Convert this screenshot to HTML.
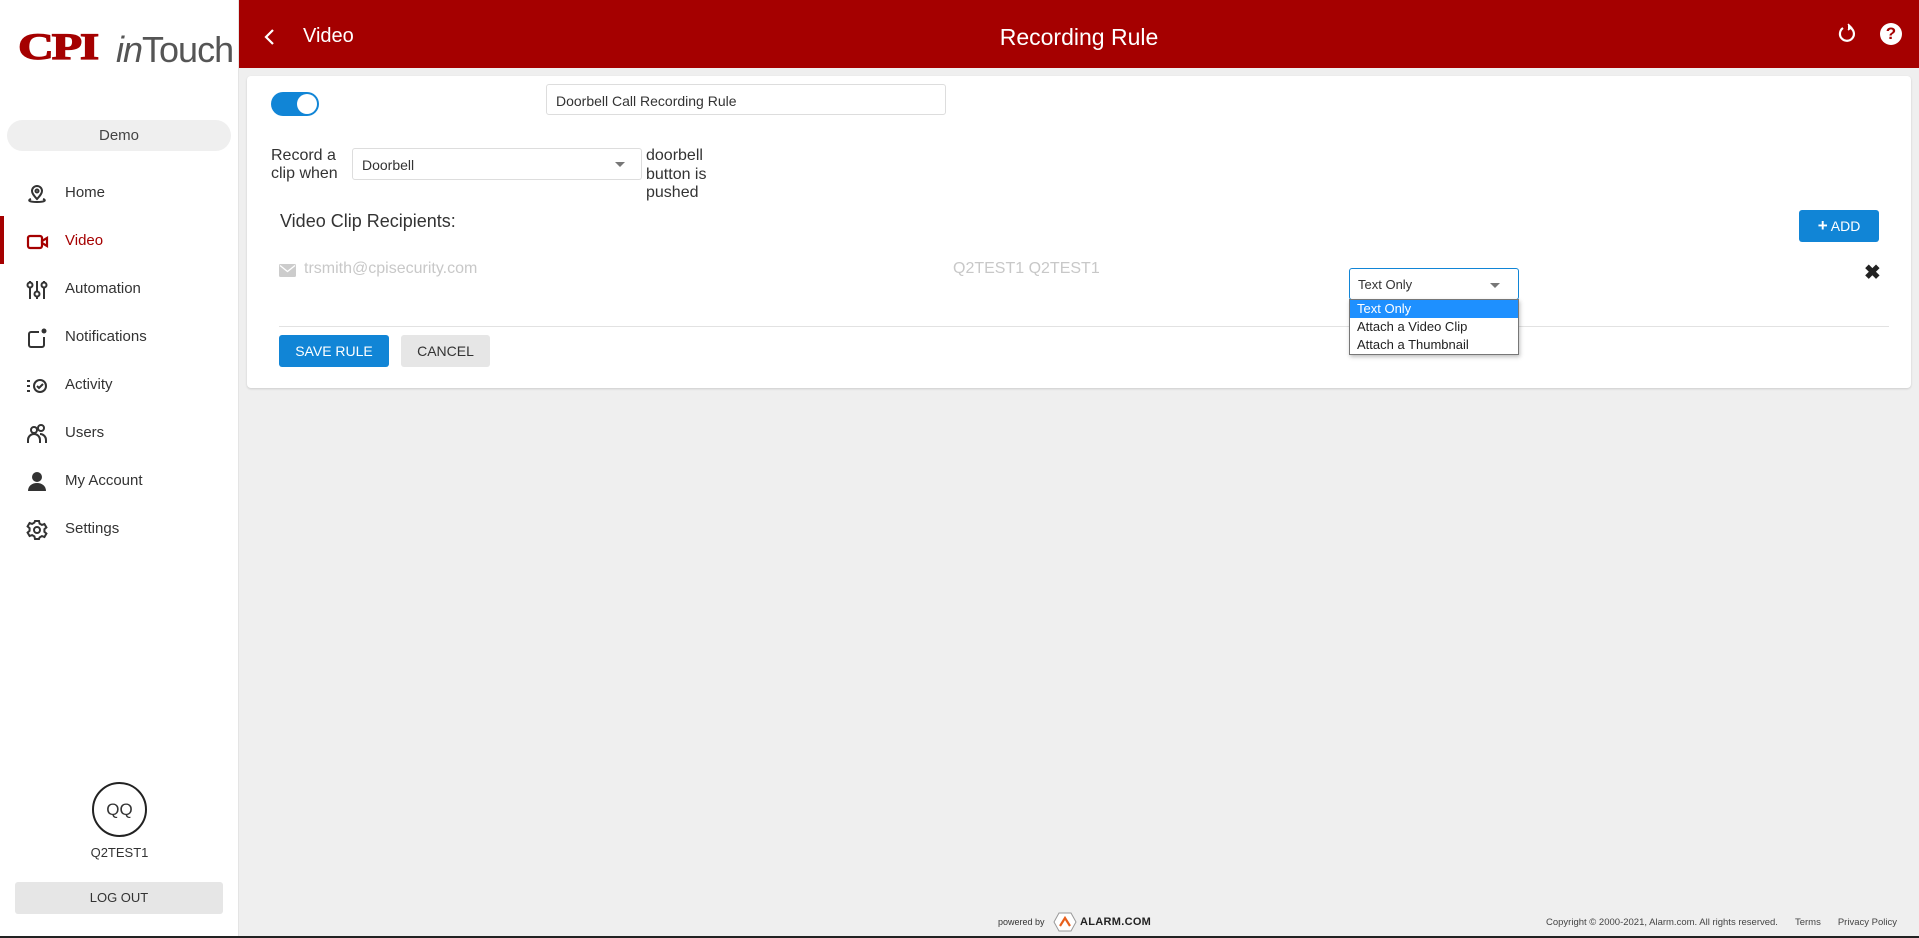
<!DOCTYPE html>
<html><head><meta charset="utf-8">
<style>
*{box-sizing:border-box;margin:0;padding:0}
body{width:1919px;height:938px;overflow:hidden;background:#efefef;font-family:"Liberation Sans",Arial,sans-serif;position:relative}
.abs{position:absolute}
#hdr{left:0;top:0;width:1919px;height:68px;background:#a50000}
#side{left:0;top:0;width:239px;height:936px;background:#fff;border-right:1px solid #e4e4e4}
.nav{position:absolute;left:0;width:239px;height:48px;font-size:15px;color:#333}
.nav span{position:absolute;left:65px;top:16px}
.nav svg{position:absolute;left:26px;top:15px}
#card{left:247px;top:76px;width:1664px;height:312px;background:#fff;border-radius:4px;box-shadow:0 1px 2px rgba(0,0,0,.15)}
.btn{position:absolute;border-radius:3px;font-size:14px;text-align:center}
</style></head><body>
<div id="hdr" class="abs"></div>
<div id="side" class="abs">
  <div class="abs" style="left:18px;top:31px;font-family:'Liberation Serif',serif;font-weight:bold;font-size:46px;color:#a50000;letter-spacing:-2px;transform:scale(1.08,0.8);transform-origin:left top;line-height:40px;-webkit-text-stroke:1.5px #a50000">CPI</div>
  <div class="abs" style="left:116px;top:30px;font-size:36px;color:#555;line-height:40px;letter-spacing:-1px"><i>in</i>Touch</div>
  <div class="abs" style="left:7px;top:120px;width:224px;height:31px;background:#efefef;border-radius:16px;text-align:center;line-height:31px;font-size:15px;color:#444">Demo</div>
  <div class="nav" style="top:168px"><svg width="22" height="22" viewBox="0 0 22 22" fill="none" stroke="#333" stroke-width="2"><path d="M11 3a5 5 0 0 1 5 5c0 3-5 8-5 8s-5-5-5-8a5 5 0 0 1 5-5z"/><circle cx="11" cy="8" r="1.5"/><path d="M5 16c-3 1-3 3 6 3s9-2 6-3"/></svg><span>Home</span></div>
  <div class="abs" style="left:0;top:216px;width:4px;height:48px;background:#a50000"></div>
  <div class="nav" style="top:216px;color:#a50000"><svg width="24" height="22" viewBox="0 0 24 22" fill="none" stroke="#a50000" stroke-width="2.2"><rect x="2" y="5" width="14" height="12" rx="2"/><path d="M16 10l5-3v8l-5-3z"/></svg><span>Video</span></div>
  <div class="nav" style="top:264px"><svg width="22" height="22" viewBox="0 0 22 22" fill="none" stroke="#333" stroke-width="2"><path d="M4 2v18M11 2v18M18 2v18"/><circle cx="4" cy="6" r="2.5" fill="#fff"/><circle cx="11" cy="15" r="2.5" fill="#fff"/><circle cx="18" cy="6" r="2.5" fill="#fff"/></svg><span>Automation</span></div>
  <div class="nav" style="top:312px"><svg width="22" height="22" viewBox="0 0 22 22" fill="none" stroke="#333" stroke-width="2"><path d="M13 5H5a2 2 0 0 0-2 2v11a2 2 0 0 0 2 2h11a2 2 0 0 0 2-2v-8"/><circle cx="18" cy="4" r="2.5" fill="#333" stroke="none"/></svg><span>Notifications</span></div>
  <div class="nav" style="top:360px"><svg width="22" height="22" viewBox="0 0 22 22" fill="none" stroke="#333" stroke-width="2"><path d="M1 6h3M1 11h3M1 16h3"/><circle cx="14" cy="11" r="6"/><path d="M11 11l2 2 4-4"/></svg><span>Activity</span></div>
  <div class="nav" style="top:408px"><svg width="22" height="22" viewBox="0 0 22 22" fill="none" stroke="#333" stroke-width="2"><circle cx="8" cy="7" r="3"/><circle cx="15" cy="5" r="3"/><path d="M2 20v-3a6 6 0 0 1 12 0v3M14 11a6 6 0 0 1 6 6v3"/></svg><span>Users</span></div>
  <div class="nav" style="top:456px"><svg width="22" height="22" viewBox="0 0 22 22" fill="#333"><circle cx="11" cy="6" r="5"/><path d="M2 20c0-5 4-8 9-8s9 3 9 8z"/></svg><span>My Account</span></div>
  <div class="nav" style="top:504px"><svg width="22" height="22" viewBox="0 0 22 22" fill="none" stroke="#333" stroke-width="2"><circle cx="11" cy="11" r="3"/><path d="M9 2h4l.6 2.6 2.3 1.3 2.5-.9 2 3.4-2 1.8v2.6l2 1.8-2 3.4-2.5-.9-2.3 1.3L13 20H9l-.6-2.6-2.3-1.3-2.5.9-2-3.4 2-1.8V9.2l-2-1.8 2-3.4 2.5.9 2.3-1.3z"/></svg><span>Settings</span></div>
  <div class="abs" style="left:92px;top:782px;width:55px;height:55px;border:2px solid #222;border-radius:50%;text-align:center;line-height:51px;font-size:17px;color:#333">QQ</div>
  <div class="abs" style="left:0;top:845px;width:239px;text-align:center;font-size:13px;color:#333">Q2TEST1</div>
  <div class="abs" style="left:15px;top:882px;width:208px;height:32px;background:#e6e6e6;border-radius:3px;text-align:center;line-height:32px;font-size:13px;color:#333">LOG OUT</div>
</div>
<svg class="abs" style="left:263px;top:28px" width="14" height="18" viewBox="0 0 14 18" fill="none" stroke="#fff" stroke-width="2.2"><path d="M10 2L3 9l7 7"/></svg>
<div class="abs" style="left:303px;top:25px;font-size:20px;color:#fff">Video</div>
<div class="abs" style="left:879px;top:24px;width:400px;text-align:center;font-size:23px;color:#fff">Recording Rule</div>
<svg class="abs" style="left:1837px;top:22px" width="20" height="22" viewBox="0 0 20 22" fill="none" stroke="#fff" stroke-width="2.2"><path d="M13 5.5A7 7 0 1 1 6 6"/><path d="M11 2l3.5 3.5L11 8" fill="#fff" stroke-width="1.5"/></svg>
<div class="abs" style="left:1880px;top:23px;width:22px;height:22px;border-radius:50%;background:#fff;color:#a50000;font-weight:bold;font-size:17px;text-align:center;line-height:22px">?</div>

<div id="card" class="abs"></div>
<div class="abs" style="left:271px;top:92px;width:48px;height:24px;border-radius:12px;background:#1185d6"></div>
<div class="abs" style="left:297px;top:94px;width:20px;height:20px;border-radius:50%;background:#fff"></div>
<div class="abs" style="left:546px;top:84px;width:400px;height:31px;border:1px solid #ddd;border-radius:3px;font-size:14px;color:#333;padding:8px 9px">Doorbell Call Recording Rule</div>
<div class="abs" style="left:271px;top:147px;font-size:16px;line-height:18px;color:#333">Record a<br>clip when</div>
<div class="abs" style="left:352px;top:148px;width:290px;height:32px;border:1px solid #ddd;border-radius:3px;font-size:14px;color:#333;padding:8px 9px">Doorbell</div>
<div class="abs" style="left:615px;top:162px;width:0;height:0;border-left:5px solid transparent;border-right:5px solid transparent;border-top:5px solid #777"></div>
<div class="abs" style="left:646px;top:147px;font-size:16px;line-height:18.5px;color:#333">doorbell<br>button is<br>pushed</div>
<div class="abs" style="left:280px;top:211px;font-size:18px;color:#333">Video Clip Recipients:</div>
<div class="btn" style="left:1799px;top:210px;width:80px;height:32px;background:#1185d6;color:#fff;line-height:32px"><b style="font-size:17px">+</b> ADD</div>
<svg class="abs" style="left:279px;top:264px" width="17" height="13" viewBox="0 0 17 13"><rect width="17" height="13" rx="1.5" fill="#ccc"/><path d="M1 1.5l7.5 6 7.5-6" fill="none" stroke="#fff" stroke-width="1.3"/></svg>
<div class="abs" style="left:304px;top:260px;font-size:16px;color:#c8c8c8">trsmith@cpisecurity.com</div>
<div class="abs" style="left:953px;top:260px;font-size:16px;color:#c8c8c8">Q2TEST1 Q2TEST1</div>
<div class="abs" style="left:1349px;top:268px;width:170px;height:32px;border:1px solid #1185d6;border-radius:3px;font-size:13px;color:#333;padding:8px 8px">Text Only</div>
<div class="abs" style="left:1490px;top:283px;width:0;height:0;border-left:5px solid transparent;border-right:5px solid transparent;border-top:5px solid #777"></div>
<div class="abs" style="left:1864px;top:260px;font-size:20px;font-weight:bold;color:#222">✖</div>
<div class="abs" style="left:279px;top:326px;width:1610px;height:1px;background:#e2e2e2"></div>
<div class="abs" style="left:1349px;top:299px;width:170px;height:56px;border:1px solid #777;background:#fff;font-size:13px;color:#222;box-shadow:1px 2px 4px rgba(0,0,0,.25);line-height:18px">
  <div style="background:#1e90ff;color:#fff;padding-left:7px">Text Only</div>
  <div style="padding-left:7px">Attach a Video Clip</div>
  <div style="padding-left:7px">Attach a Thumbnail</div>
</div>
<div class="btn" style="left:279px;top:335px;width:110px;height:32px;background:#1185d6;color:#fff;line-height:32px">SAVE RULE</div>
<div class="btn" style="left:401px;top:335px;width:89px;height:32px;background:#e6e6e6;color:#333;line-height:32px">CANCEL</div>

<div class="abs" style="left:998px;top:917px;font-size:9px;color:#333">powered by</div>
<svg class="abs" style="left:1052px;top:912px" width="26" height="20" viewBox="0 0 24 20"><path d="M6 1h12l5 9-5 9H6l-5-9z" fill="#fff" stroke="#999"/><path d="M7 14l5-8 5 8" fill="none" stroke="#e8601c" stroke-width="2.2"/></svg>
<div class="abs" style="left:1080px;top:916px;font-size:11px;font-weight:bold;color:#222;letter-spacing:.3px">ALARM.COM</div>
<div class="abs" style="left:1546px;top:917px;font-size:9.5px;color:#444;white-space:nowrap">Copyright © 2000-2021, Alarm.com. All rights reserved.<span style="margin-left:17px">Terms</span><span style="margin-left:17px">Privacy Policy</span></div>
<div class="abs" style="left:0;top:936px;width:1919px;height:2px;background:#222"></div>
</body></html>
